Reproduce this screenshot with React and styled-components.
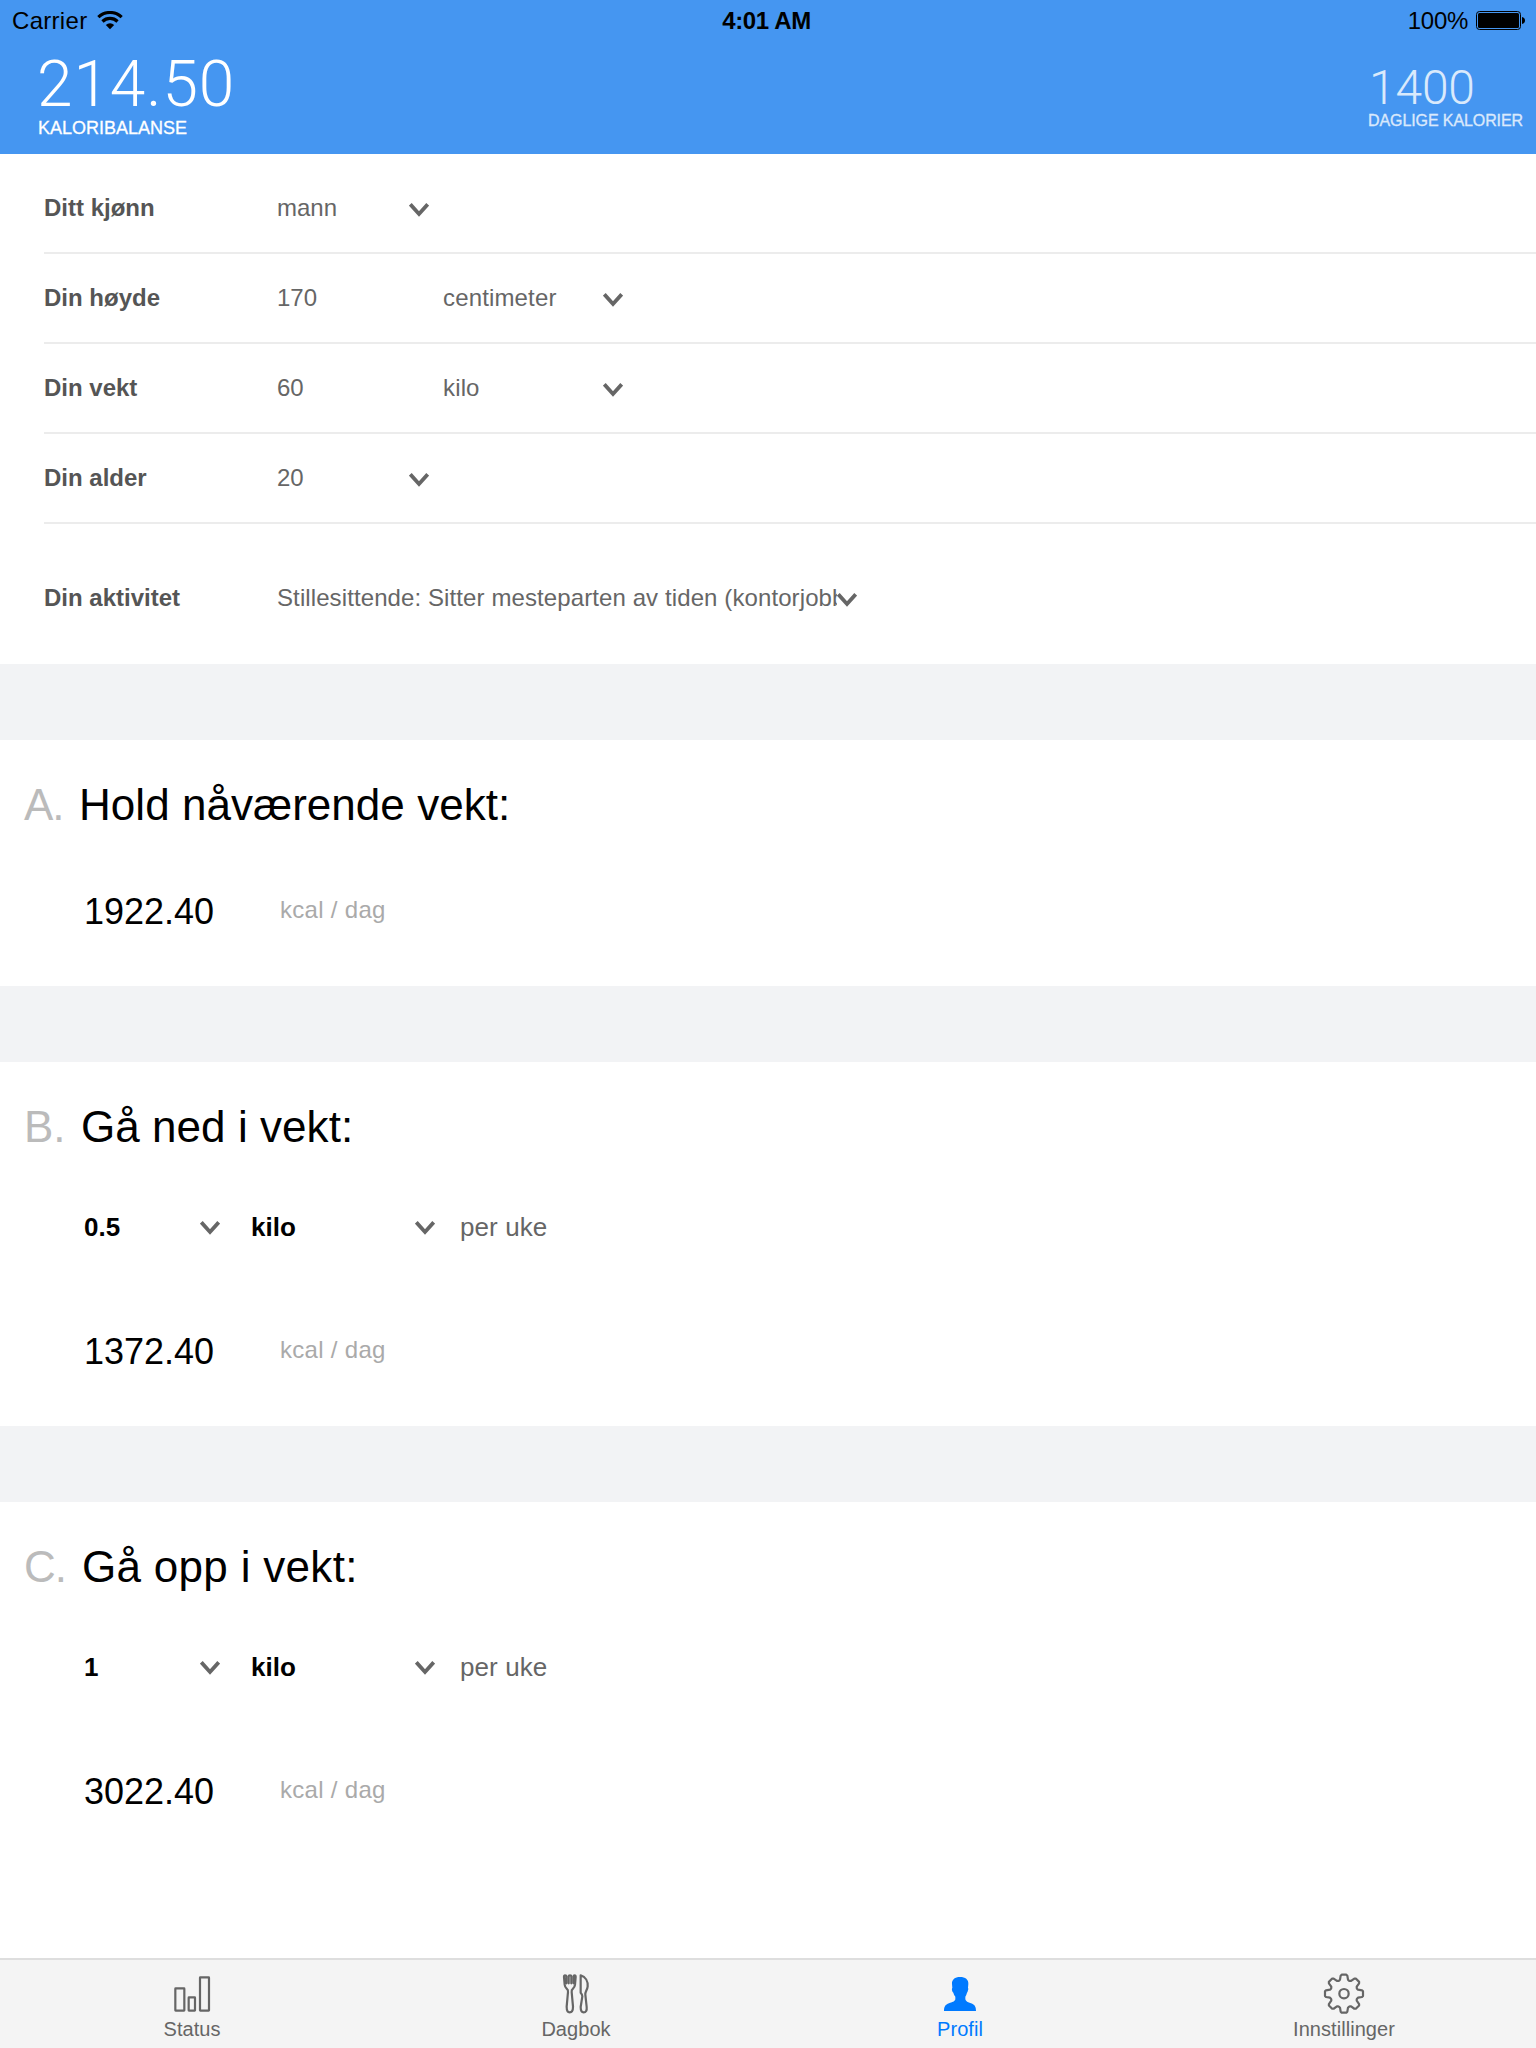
import React from "react";
import styled, { createGlobalStyle } from "styled-components";

const GlobalStyle = createGlobalStyle`
  html, body { margin: 0; padding: 0; background: #fff; }
  body { font-family: "Liberation Sans", Arial, Helvetica, sans-serif; color: #000; }
  *, *::before, *::after { box-sizing: border-box; }
`;

const Screen = styled.div`
  width: 1536px;
  height: 2048px;
  display: flex;
  flex-direction: column;
  background: #fff;
  overflow: hidden;
  white-space: nowrap;
`;

const Header = styled.header`
  height: 154px;
  background: #4596f1;
`;

const StatusBar = styled.div`
  height: 42px;
  line-height: 42px;
  padding: 0 11px 0 12px;
  display: grid;
  grid-template-columns: 1fr auto 1fr;
  font-size: 24px;
`;

const StatusGroup = styled.div`
  display: flex;
  justify-content: ${(p) => (p.$end ? "flex-end" : "flex-start")};
  gap: ${(p) => (p.$end ? "8px" : "10px")};
  letter-spacing: ${(p) => (p.$end ? "-0.3px" : "0.3px")};
  svg { margin-top: 11px; flex: none; }
`;

const Clock = styled.div`
  padding-right: 4px;
  font-weight: 700;
  letter-spacing: -0.35px;
`;

const Summary = styled.div`
  display: flex;
  justify-content: space-between;
  padding: 0 13px 0 38px;
  color: #fff;
`;

const Balance = styled.div`
  padding-top: 11px;
`;

const BalanceValue = styled.div`
  margin-left: -1px;
  font-family: Roboto, "Liberation Sans", sans-serif;
  font-weight: 300;
  font-size: 64px;
  line-height: 64px;
  height: 60px;
  letter-spacing: 0.9px;
`;

const BalanceLabel = styled.div`
  font-size: 18px;
  line-height: 30px;
  -webkit-text-stroke: 0.3px currentColor;
`;

const Goal = styled.div`
  padding-top: 21px;
  opacity: 0.8;
`;

const GoalValue = styled.div`
  padding-left: 1px;
  font-family: Roboto, "Liberation Sans", sans-serif;
  font-weight: 300;
  font-size: 48px;
  line-height: 50px;
  height: 49px;
  letter-spacing: -0.2px;
`;

const GoalLabel = styled.div`
  font-size: 16px;
  line-height: 17px;
  letter-spacing: -0.1px;
  -webkit-text-stroke: 0.3px currentColor;
`;

const Form = styled.section`
  padding: 10px 0 0 44px;
`;

const Field = styled.div`
  display: flex;
  align-items: center;
  height: ${(p) => (p.$last ? "140px" : "90px")};
  padding-top: ${(p) => (p.$last ? "8px" : "0")};
  border-bottom: ${(p) => (p.$last ? "0" : "2px solid #ececec")};
  font-size: 24px;
  color: #666;
`;

const FieldLabel = styled.label`
  width: 233px;
  font-weight: 700;
  color: #555;
`;

const FieldValue = styled.div`
  width: ${(p) => p.$width}px;
  overflow: hidden;
  letter-spacing: ${(p) => p.$tracking || 0}px;
`;

const ChevronIcon = styled.svg`
  display: block;
  flex: none;
  width: 20px;
  height: 14px;
  margin-top: ${(p) => p.$drop || 0}px;
`;

const Divider = styled.div`
  height: 76px;
  background: #f2f3f5;
`;

const Plan = styled.section`
  height: ${(p) => p.$height};
  flex: ${(p) => (p.$height ? "none" : "1")};
  padding: 33px 0 0 24px;
`;

const PlanTitle = styled.h2`
  display: flex;
  margin: 0;
  font-size: 44px;
  font-weight: 400;
  line-height: 64px;
  letter-spacing: ${(p) => p.$tracking}px;
`;

const PlanLetter = styled.span`
  width: ${(p) => p.$width}px;
  letter-spacing: ${(p) => p.$tracking}px;
  color: #bbb;
`;

const PaceRow = styled.div`
  display: flex;
  align-items: center;
  height: 60px;
  margin-top: 38px;
  padding-left: 60px;
  font-size: 26px;
`;

const PaceSelect = styled.div`
  display: flex;
  justify-content: space-between;
  align-items: center;
  width: ${(p) => p.$width}px;
  margin-right: ${(p) => p.$gap}px;
  font-weight: 700;
`;

const PaceText = styled.span`
  letter-spacing: 0.1px;
  color: #666;
`;

const ResultRow = styled.div`
  display: flex;
  align-items: flex-start;
  margin-top: ${(p) => (p.$spaced ? "60px" : "40px")};
  padding-left: 60px;
`;

const ResultValue = styled.div`
  width: 196px;
  font-size: 36px;
  line-height: 70px;
`;

const ResultUnit = styled.div`
  font-size: 24px;
  line-height: 65px;
  letter-spacing: 0.3px;
  color: #aaa;
`;

const TabBar = styled.nav`
  flex: none;
  height: 90px;
  display: grid;
  grid-template-columns: repeat(4, 1fr);
  background: #f4f4f4;
  border-top: 2px solid #dedede;
`;

const Tab = styled.div`
  display: flex;
  flex-direction: column;
  align-items: center;
  padding-top: 12px;
  font-size: 20px;
  line-height: 26px;
  letter-spacing: 0.05px;
  color: ${(p) => (p.$active ? "#007aff" : "#666")};
  svg { display: block; overflow: visible; }
`;

const Chevron = ({ drop }) => (
  <ChevronIcon viewBox="0 0 20 14" $drop={drop}>
    <path d="M1.3 1.4L10 11L18.7 1.4" fill="none" stroke="#666" strokeWidth="3.8" />
  </ChevronIcon>
);

const WifiIcon = () => (
  <svg width="26" height="19" viewBox="0 0 78 57">
    <g fill="none" stroke="#000" strokeWidth="9.5">
      <path d="M4 18.5A50.5 50.5 0 0 1 74 18.5" />
      <path d="M16.4 31.5A32.5 32.5 0 0 1 61.6 31.5" />
    </g>
    <path d="M39 55L26.5 42A18 18 0 0 1 51.5 42Z" />
  </svg>
);

const BatteryIcon = () => (
  <svg width="49" height="19" viewBox="0 0 49 19">
    <rect x="0.5" y="0.5" width="44" height="18" rx="3" fill="none" stroke="#000" />
    <rect x="2" y="2" width="41" height="15" rx="1.5" />
    <path d="M46 6C48 6.4 49 7.6 49 9.5S48 12.6 46 13Z" />
  </svg>
);

const TabIcon = ({ children }) => (
  <svg width="40" height="44" viewBox="0 0 120 132" fill="none" stroke="currentColor" strokeWidth="6.6" strokeLinejoin="round" strokeLinecap="round">
    {children}
  </svg>
);

const StatusIcon = () => (
  <TabIcon>
    <rect x="10" y="49" width="27" height="67" rx="1" />
    <rect x="50" y="76" width="19" height="40" rx="1" />
    <rect x="84" y="16" width="27" height="100" rx="1" />
  </TabIcon>
);

const DiaryIcon = () => (
  <TabIcon>
    <path d="M27 10Q24 10 24 15L26 38Q27 46 32 50Q37 54 36 60L32 104C32 114 34 121 41 121S51 114 51 104L47 60Q46 54 51 50Q56 46 57 38L59 15Q59 10 56 10Q53 10 53 13V34M27 10Q31 10 31 13V34M38 34V12Q38 10 42 10Q46 10 46 12V34" />
    <path d="M74 10C89 14 96 28 95 43C94 54 87 59 88 68L92 105C93 115 90 121 83 121S74 115 74 105L79 73Q79 67 74 62Z" />
  </TabIcon>
);

const ProfileIcon = () => (
  <TabIcon>
    <path
      stroke="none"
      fill="currentColor"
      d="M60 15C76 15 86 23 85 36L84 47Q86 50 84 55Q83 60 81 62Q79 70 76 74V82C77 88 84 91 93 94C104 98 108 104 108 117H12C12 104 16 98 27 94C36 91 45 88 46 82V74Q42 70 40 62Q37 60 36 55Q35 50 37 47L36 36C35 23 45 15 60 15Z"
    />
  </TabIcon>
);

// One tooth of the gear, pointing up from the centre; repeated every 45 degrees.
const toothPoints = [
  [-15, -39],
  [-12, -42],
  [-10, -54],
  [-7, -57],
  [7, -57],
  [10, -54],
  [12, -42],
  [15, -39],
];

const gearPath =
  Array.from({ length: 8 }, (_, i) => {
    const a = (i * Math.PI) / 4;
    return toothPoints
      .map(([x, y], j) => {
        const px = 60 + x * Math.cos(a) - y * Math.sin(a);
        const py = 65 + x * Math.sin(a) + y * Math.cos(a);
        return `${i === 0 && j === 0 ? "M" : "L"}${px.toFixed(1)} ${py.toFixed(1)}`;
      })
      .join("");
  }).join("") + "Z";

const SettingsIcon = () => (
  <TabIcon>
    <path d={gearPath} />
    <circle cx="60" cy="65" r="14" />
  </TabIcon>
);

const fields = [
  { label: "Ditt kjønn", parts: [{ text: "mann", width: 132, select: true }] },
  { label: "Din høyde", parts: [{ text: "170", width: 166 }, { text: "centimeter", width: 160, select: true, tracking: 0.15 }] },
  { label: "Din vekt", parts: [{ text: "60", width: 166 }, { text: "kilo", width: 160, select: true, tracking: 0.15 }] },
  { label: "Din alder", parts: [{ text: "20", width: 132, select: true }] },
  {
    label: "Din aktivitet",
    parts: [{ text: "Stillesittende: Sitter mesteparten av tiden (kontorjobb)", width: 560, select: true, tracking: 0.1 }],
  },
];

const plans = [
  { letter: "A.", indent: 55, letterTracking: -1, title: "Hold nåværende vekt:", tracking: 0.04, result: "1922.40", height: "246px" },
  { letter: "B.", indent: 57, letterTracking: 0, title: "Gå ned i vekt:", tracking: 0.05, result: "1372.40", pace: "0.5", height: "364px" },
  { letter: "C.", indent: 58, letterTracking: -1, title: "Gå opp i vekt:", tracking: 0.3, result: "3022.40", pace: "1" },
];

const tabs = [
  { label: "Status", Icon: StatusIcon },
  { label: "Dagbok", Icon: DiaryIcon },
  { label: "Profil", Icon: ProfileIcon, active: true },
  { label: "Innstillinger", Icon: SettingsIcon },
];

export default function App() {
  return (
    <>
      <GlobalStyle />
      <Screen>
        <Header>
          <StatusBar>
            <StatusGroup>
              <span>Carrier</span>
              <WifiIcon />
            </StatusGroup>
            <Clock>4:01 AM</Clock>
            <StatusGroup $end>
              <span>100%</span>
              <BatteryIcon />
            </StatusGroup>
          </StatusBar>
          <Summary>
            <Balance>
              <BalanceValue>214.50</BalanceValue>
              <BalanceLabel>KALORIBALANSE</BalanceLabel>
            </Balance>
            <Goal>
              <GoalValue>1400</GoalValue>
              <GoalLabel>DAGLIGE KALORIER</GoalLabel>
            </Goal>
          </Summary>
        </Header>
        <Form>
          {fields.map(({ label, parts }, i) => (
            <Field key={label} $last={i === fields.length - 1}>
              <FieldLabel>{label}</FieldLabel>
              {parts.map((part) => (
                <React.Fragment key={part.text}>
                  <FieldValue $width={part.width} $tracking={part.tracking}>{part.text}</FieldValue>
                  {part.select && <Chevron drop={3} />}
                </React.Fragment>
              ))}
            </Field>
          ))}
        </Form>
        {plans.map((plan) => (
          <React.Fragment key={plan.letter}>
            <Divider />
            <Plan $height={plan.height}>
              <PlanTitle $tracking={plan.tracking}>
                <PlanLetter $width={plan.indent} $tracking={plan.letterTracking}>{plan.letter}</PlanLetter>
                {plan.title}
              </PlanTitle>
              {plan.pace && (
                <PaceRow>
                  <PaceSelect $width={136} $gap={31}>
                    {plan.pace}
                    <Chevron drop={2} />
                  </PaceSelect>
                  <PaceSelect $width={184} $gap={25}>
                    kilo
                    <Chevron drop={2} />
                  </PaceSelect>
                  <PaceText>per uke</PaceText>
                </PaceRow>
              )}
              <ResultRow $spaced={Boolean(plan.pace)}>
                <ResultValue>{plan.result}</ResultValue>
                <ResultUnit>kcal / dag</ResultUnit>
              </ResultRow>
            </Plan>
          </React.Fragment>
        ))}
        <TabBar>
          {tabs.map(({ label, Icon, active }) => (
            <Tab key={label} $active={active}>
              <Icon />
              <span>{label}</span>
            </Tab>
          ))}
        </TabBar>
      </Screen>
    </>
  );
}
